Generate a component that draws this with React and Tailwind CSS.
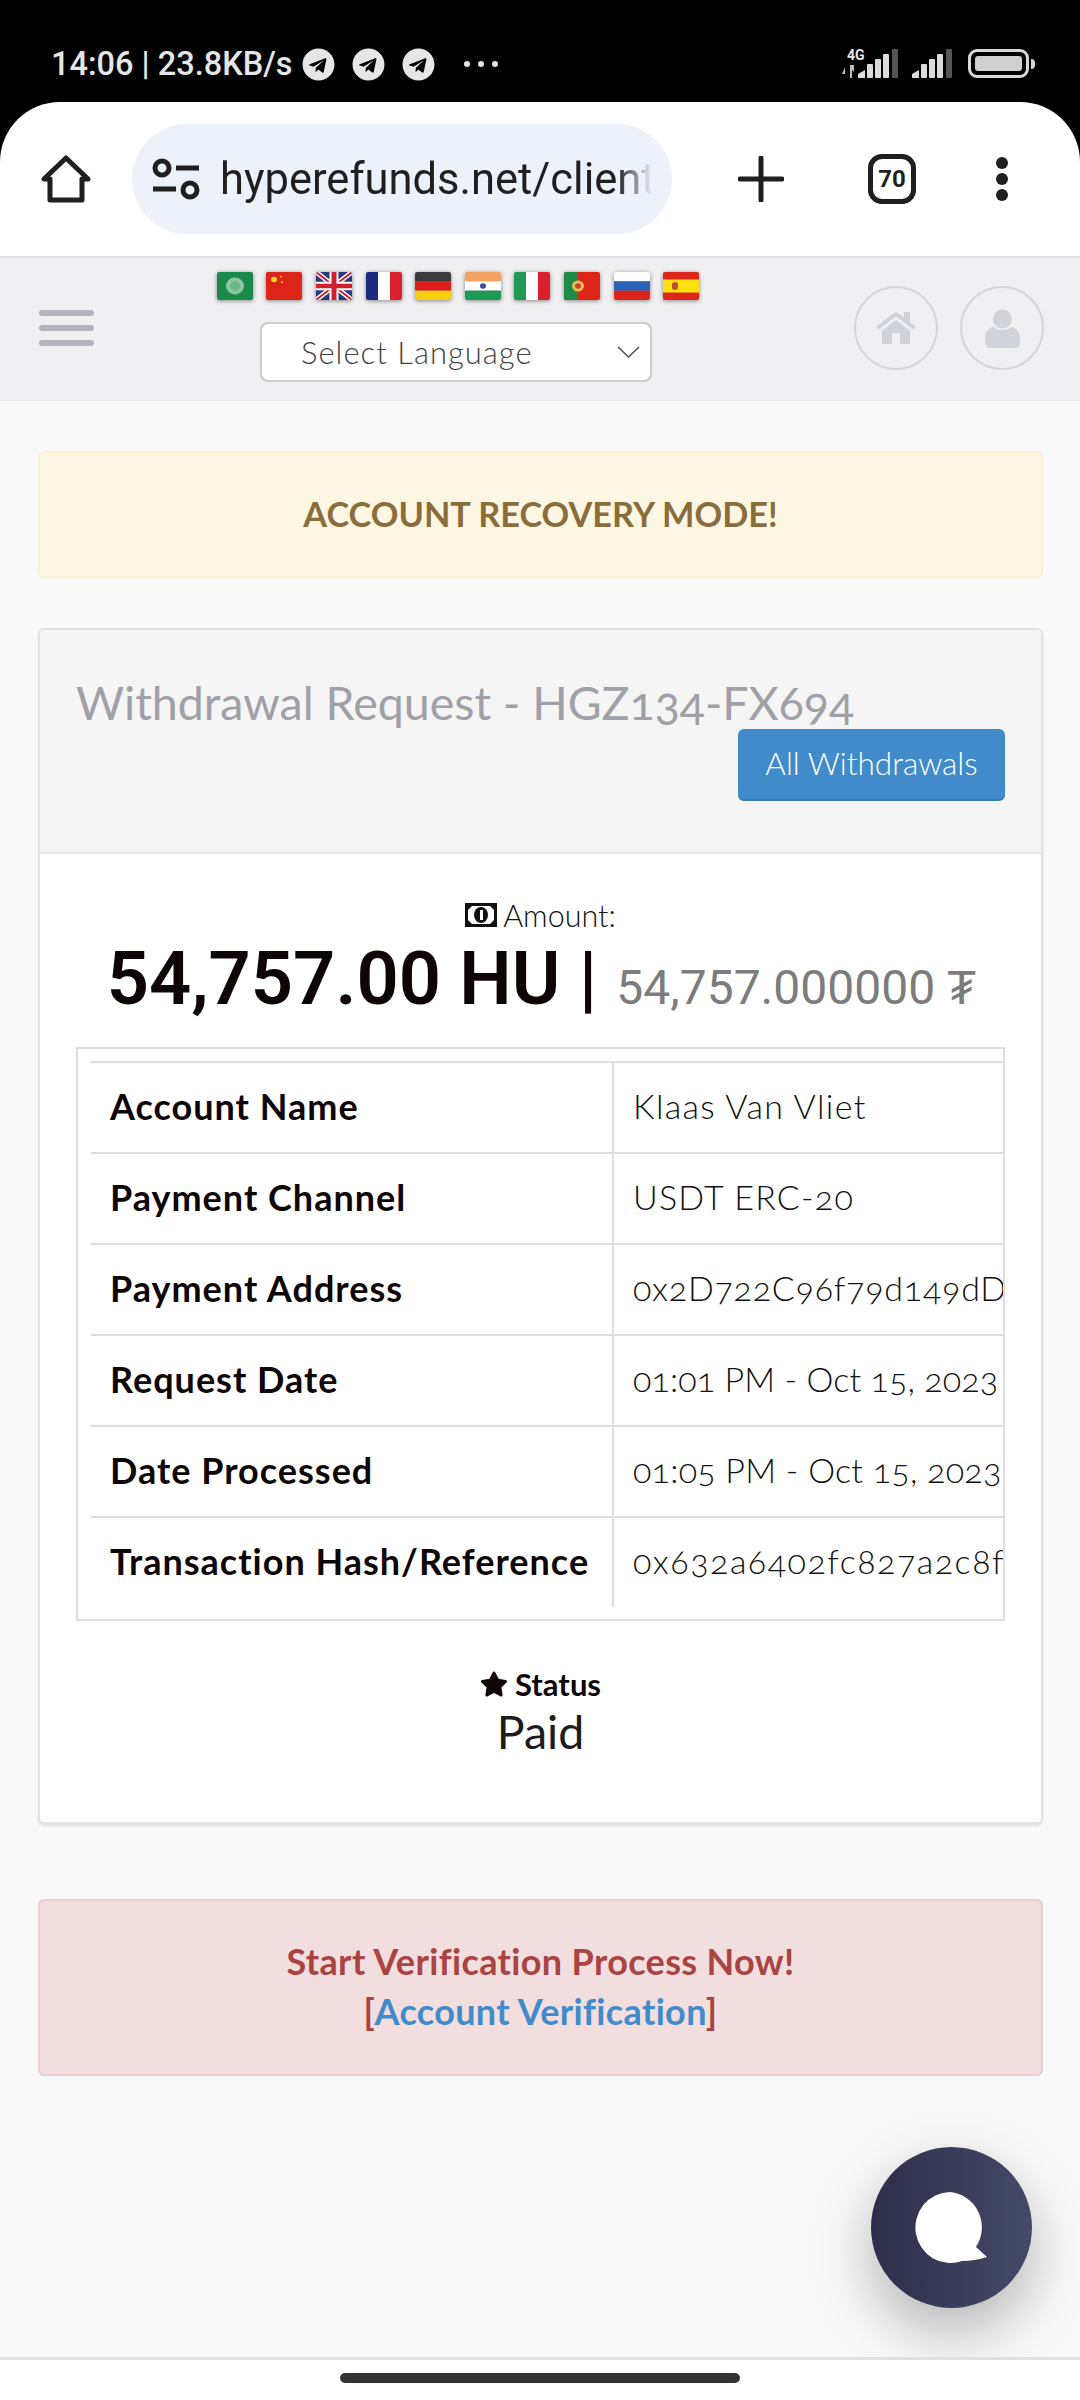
import React from 'react';
import { FaTelegram, FaStar } from 'react-icons/fa';

const sans = "font-['Lato','Noto_Sans',sans-serif]";

const rows = [
  ['Account Name', 'Klaas Van Vliet', 'tracking-[1.3px]'],
  ['Payment Channel', 'USDT ERC-20', 'tracking-[1.2px]'],
  ['Payment Address', '0x2D722C96f79d149dD', 'tracking-[0.75px]'],
  ['Request Date', '01:01 PM - Oct 15, 2023', 'tracking-[0.1px]'],
  ['Date Processed', '01:05 PM - Oct 15, 2023', 'tracking-[0.25px]'],
  ['Transaction Hash/Reference', '0x632a6402fc827a2c8f', 'tracking-[1.5px]'],
];

const Flag = ({ children }) => (
  <svg width="36" height="28" viewBox="0 0 36 30" preserveAspectRatio="none" className="rounded-[2px] blur-[0.4px] drop-shadow-[0_1px_2px_rgba(0,0,0,0.45)]">
    {children}
  </svg>
);

const Stripes3V = ({ a, b, c }) => (
  <>
    <rect width="12" height="30" fill={a} />
    <rect x="12" width="12" height="30" fill={b} />
    <rect x="24" width="12" height="30" fill={c} />
  </>
);

const Stripes3H = ({ a, b, c }) => (
  <>
    <rect width="36" height="10" fill={a} />
    <rect y="10" width="36" height="10" fill={b} />
    <rect y="20" width="36" height="10" fill={c} />
  </>
);

const Flags = () => (
  <div className="flex gap-[13.6px]">
    <Flag>
      <rect width="36" height="30" fill="#1a8a4a" />
      <circle cx="18" cy="15" r="9" fill="#8cc5a0" />
      <circle cx="18" cy="15" r="5" fill="#6db58a" />
    </Flag>
    <Flag>
      <rect width="36" height="30" fill="#dd2418" />
      <circle cx="8" cy="8" r="3" fill="#f5d020" />
      <circle cx="15" cy="5" r="1" fill="#f5d020" />
      <circle cx="16" cy="11" r="1" fill="#f5d020" />
    </Flag>
    <Flag>
      <rect width="36" height="30" fill="#2b3a80" />
      <path d="M0 0L36 30M36 0L0 30" stroke="#fff" strokeWidth="5" />
      <path d="M0 0L36 30M36 0L0 30" stroke="#d0202c" strokeWidth="2" />
      <path d="M18 0V30M0 15H36" stroke="#fff" strokeWidth="9" />
      <path d="M18 0V30M0 15H36" stroke="#d0202c" strokeWidth="5" />
    </Flag>
    <Flag><Stripes3V a="#1c2a80" b="#ffffff" c="#d9202c" /></Flag>
    <Flag><Stripes3H a="#3a3a3a" b="#dd1c1c" c="#f7cf10" /></Flag>
    <Flag>
      <Stripes3H a="#f5a260" b="#ffffff" c="#1f9a55" />
      <circle cx="18" cy="15" r="3" fill="#3b4a9a" />
    </Flag>
    <Flag><Stripes3V a="#1f9a55" b="#ffffff" c="#d9202c" /></Flag>
    <Flag>
      <rect width="36" height="30" fill="#dd2418" />
      <rect width="14" height="30" fill="#1f8a45" />
      <circle cx="14" cy="15" r="6" fill="#e8c050" />
      <circle cx="14" cy="15" r="3" fill="#d0402c" />
    </Flag>
    <Flag><Stripes3H a="#ffffff" b="#2a62b8" c="#dd2418" /></Flag>
    <Flag>
      <rect width="36" height="30" fill="#dd2418" />
      <rect y="8" width="36" height="14" fill="#fbe012" />
      <rect x="9" y="11" width="6" height="8" rx="2" fill="#c0502a" />
    </Flag>
  </div>
);

const Signal = () => (
  <svg width="40" height="29" viewBox="0 0 40 29" className="shrink-0">
    <path d="M0 29V25L7 21V29Z" fill="#dcdcdc" />
    <rect x="9" y="15" width="6" height="14" rx="1" fill="#dcdcdc" />
    <rect x="17" y="10" width="6" height="19" rx="1" fill="#dcdcdc" />
    <rect x="25" y="5" width="6" height="24" rx="1" fill="#dcdcdc" />
    <rect x="34" y="0" width="6" height="29" rx="1" fill="#555" />
  </svg>
);

const StatusBar = () => (
  <div className="h-[102px] bg-black flex items-start justify-between pl-[51px] pr-[45px] pt-[46px]">
    <div className="flex items-center text-[#e6e6e6] font-['Roboto',sans-serif] font-medium text-[32.5px] leading-[36px] h-[36px] whitespace-nowrap">
      <span>14:06 | 23.8KB/s</span>
      <FaTelegram className="ml-[9px] text-[33px]" />
      <FaTelegram className="ml-[17px] text-[33px]" />
      <FaTelegram className="ml-[17px] text-[33px]" />
      <span className="ml-[29px] flex gap-[8px]">
        <i className="block w-[6px] h-[6px] rounded-full bg-[#e6e6e6]" />
        <i className="block w-[6px] h-[6px] rounded-full bg-[#e6e6e6]" />
        <i className="block w-[6px] h-[6px] rounded-full bg-[#e6e6e6]" />
      </span>
    </div>
    <div className="flex items-start h-[32px] mt-[3px]">
      <div className="relative w-[57px] h-[29px] flex justify-end">
        <span className="absolute left-[6px] -top-[1px] text-[#e6e6e6] font-['Roboto',sans-serif] font-bold text-[14px] leading-none">4G</span>
        <svg width="12" height="13" viewBox="0 0 12 13" className="absolute left-[1px] bottom-0">
          <path d="M3 2L0 9H3ZM8 0V13H10V5L12 7V0Z" fill="#bdbdbd" />
        </svg>
        <Signal />
      </div>
      <div className="ml-[14px]"><Signal /></div>
      <div className="ml-[16px] flex items-center">
        <div className="w-[61px] h-[29px] rounded-[9px] border-[3px] border-[#d8d8d8] p-[4px]">
          <div className="w-full h-full rounded-[3px] bg-[#d0d0d0]" />
        </div>
        <div className="ml-[2px] w-[4px] h-[10px] rounded-r bg-[#d8d8d8]" />
      </div>
    </div>
  </div>
);

const BrowserBar = () => (
  <div className="bg-black">
    <div className="h-[156px] bg-white rounded-t-[60px] border-b-[2px] border-[#e2e3e2] flex items-center pl-[41px]">
      <svg width="50" height="50" viewBox="0 0 50 50" fill="none" stroke="#1f1f1f" strokeWidth="5" strokeLinejoin="round" strokeLinecap="round" className="shrink-0">
        <path d="M25 4L3 25H9V46H41V25H47Z" />
      </svg>
      <div className="ml-[41px] w-[540px] h-[110px] rounded-full bg-[#edf1fa] flex items-center pl-[20px] overflow-hidden shrink-0">
        <svg width="48" height="42" viewBox="0 0 48 42" fill="none" stroke="#1f1f1f" strokeWidth="5" className="shrink-0">
          <circle cx="10" cy="10" r="7" />
          <path d="M24 10H47M1 31H24" />
          <circle cx="38" cy="32" r="7" />
        </svg>
        <span className="ml-[20px] mt-[2px] w-[432px] overflow-hidden whitespace-nowrap text-[#1f1f1f] font-['Roboto',sans-serif] text-[43.5px] leading-[56px] [mask-image:linear-gradient(to_right,black_92%,transparent)]">hyperefunds.net/client</span>
      </div>
      <svg width="46" height="46" viewBox="0 0 46 46" stroke="#1f1f1f" strokeWidth="5" strokeLinecap="round" className="ml-[66px] shrink-0">
        <path d="M23 2V44M2 23H44" />
      </svg>
      <div className="ml-[84px] w-[48px] h-[50px] rounded-[14px] border-[5px] border-[#1f1f1f] flex items-center justify-center font-['Roboto',sans-serif] font-bold text-[24px] text-[#1f1f1f] shrink-0">70</div>
      <div className="ml-[80px] flex flex-col gap-[4px] shrink-0">
        <i className="block w-[12px] h-[12px] rounded-full bg-[#1f1f1f]" />
        <i className="block w-[12px] h-[12px] rounded-full bg-[#1f1f1f]" />
        <i className="block w-[12px] h-[12px] rounded-full bg-[#1f1f1f]" />
      </div>
    </div>
  </div>
);

const NavBar = () => (
  <div className="h-[143px] bg-[#f0f0f2] border-b border-[#eaeaec] flex items-start">
    <div className="ml-[39px] mt-[52px] w-[55px] flex flex-col gap-[9px] shrink-0">
      <i className="block h-[6px] rounded-sm bg-[#b4b4bc]" />
      <i className="block h-[6px] rounded-sm bg-[#b4b4bc]" />
      <i className="block h-[6px] rounded-sm bg-[#b4b4bc]" />
    </div>
    <div className="ml-[121px] mt-[14px] shrink-0 flex flex-col items-center w-[486px]">
      <Flags />
      <div className="mt-[22px] ml-[-4px] w-[392px] h-[60px] rounded-[8px] border-2 border-[#cbccd0] bg-white flex items-center pl-[39px] pr-[10px] justify-between">
        <span className={`${sans} text-[#444] text-[31px] tracking-[1px] font-light`}>Select Language</span>
        <svg width="23" height="12" viewBox="0 0 23 12" fill="none" stroke="#555" strokeWidth="1.6"><path d="M1 1L11.5 11L22 1" /></svg>
      </div>
    </div>
    <div className="ml-[153px] mt-[28px] flex gap-[22px] shrink-0">
      <div className="w-[84px] h-[84px] rounded-full border-2 border-[#d6d6dc] flex items-center justify-center">
        <svg width="40" height="32" viewBox="0 0 40 32" fill="#d2d3da">
          <path d="M1.5 16L20 2L38.5 16" fill="none" stroke="#d2d3da" strokeWidth="4" />
          <rect x="28" y="0" width="6" height="10" />
          <path d="M6 19L20 8L34 19V32H24V21H16V32H6Z" />
        </svg>
      </div>
      <div className="w-[84px] h-[84px] rounded-full border-2 border-[#d6d6dc] flex items-center justify-center">
        <svg width="35" height="39" viewBox="0 0 35 39" fill="#d2d3da">
          <circle cx="17.5" cy="10" r="9.5" />
          <path d="M0 30C0 23 4 18 9 18C12 22 23 22 26 18C31 18 35 23 35 30V33Q35 39 29 39H6Q0 39 0 33Z" />
        </svg>
      </div>
    </div>
  </div>
);

const Card = () => (
  <div className="mt-[50px] ml-[38px] w-[1005px] h-[1196px] rounded-[6px] border-2 border-[#e2e2e2] bg-white shadow-[0_2px_3px_rgba(0,0,0,0.1)] overflow-hidden flex flex-col">
    <div className="h-[224px] bg-[#f5f5f5] border-b-2 border-[#e6e6e6] pt-[44px] px-[36px] shrink-0">
      <h2 className={`${sans} text-[#a0a0a8] text-[46.5px] leading-[56px] font-normal whitespace-nowrap [font-variant-numeric:oldstyle-nums]`}>Withdrawal Request - HGZ134-FX694</h2>
      <div className="flex justify-end mt-[-1px]">
        <button className={`${sans} w-[267px] h-[72px] rounded-[6px] bg-[#428bca] border-b-2 border-[#357ebd] text-white text-[31.5px] font-light`}>All Withdrawals</button>
      </div>
    </div>
    <div className="flex-1 px-[36px]">
      <div className="mt-[43px] flex items-center justify-center text-[#111] text-[30.5px] leading-[36px]">
        <svg width="32" height="24" viewBox="0 0 32 24" className="mr-[6px] shrink-0">
          <rect width="32" height="24" fill="#111" />
          <path d="M7 3H25L29 7V17L25 21H7L3 17V7Z" fill="#fff" />
          <ellipse cx="16" cy="12" rx="7" ry="8" fill="#111" />
          <rect x="15" y="7" width="3" height="10" fill="#fff" />
        </svg>
        <span className={`${sans} font-light`}>Amount:</span>
      </div>
      <div className="mt-[8px] ml-[2px] flex items-baseline justify-center whitespace-nowrap font-['Roboto',sans-serif] h-[75px]">
        <span className="text-[#0e0606] text-[74px] leading-[75px] font-semibold">54,757.00 HU |</span>
        <span className="ml-[19px] text-[#7c7c7c] text-[48px] leading-[75px]">54,757.000000 ₮</span>
      </div>
      <div className="mt-[31px] h-[574px] border-2 border-[#dedede] pt-[12px] pl-[13px] overflow-hidden">
        {rows.map(([label, value, spacing]) => (
          <div key={label} className="flex h-[91px] border-t-2 border-[#dedede]">
            <div className={`w-[523px] shrink-0 pl-[19px] pt-[21px] border-r-2 border-[#dedede] ${sans} font-bold text-[#0e0606] text-[36px] tracking-[1px] leading-[44px] whitespace-nowrap`}>{label}</div>
            <div className={`flex-1 pl-[19px] pt-[21px] overflow-hidden whitespace-nowrap ${sans} font-light text-[#111] text-[34px] ${spacing} leading-[44px] [font-variant-numeric:oldstyle-nums]`}>{value}</div>
          </div>
        ))}
      </div>
      <div className={`mt-[46px] flex items-center justify-center text-[#0e0606] text-[31px] leading-[34px] font-bold ${sans}`}>
        <FaStar className="text-[28px] mr-[7px]" />
        Status
      </div>
      <p className={`${sans} mt-[2px] text-center text-[#1c1c1c] text-[46.5px] leading-[56px]`}>Paid</p>
    </div>
  </div>
);

export default function App() {
  return (
    <div className="relative w-[1080px] h-[2400px] bg-[#f9f9f9] overflow-hidden flex flex-col">
      <StatusBar />
      <BrowserBar />
      <NavBar />
      <div className="flex-1">
        <div className={`mt-[50px] ml-[38px] w-[1005px] h-[127px] rounded-[6px] border-2 border-[#faf0d8] bg-[#fdf6e3] flex items-center justify-center pb-[2px] ${sans} font-bold text-[#8a6d3b] text-[34.3px]`}>
          ACCOUNT RECOVERY MODE!
        </div>
        <Card />
        <div className={`mt-[75px] ml-[38px] w-[1005px] h-[177px] rounded-[6px] border-2 border-[#ebccd1] bg-[#f2dede] flex flex-col items-center justify-center pb-[4px] ${sans} font-bold text-[#a94442] text-[36px] tracking-[0.35px] leading-[50px]`}>
          <span>Start Verification Process Now!</span>
          <span>[<a className="text-[#428bca]">Account Verification</a>]</span>
        </div>
      </div>
      <div className="relative z-10 h-[43px] bg-white border-t-[3px] border-[#e0e2e0] flex justify-center pt-[13px] shrink-0">
        <div className="w-[400px] h-[10px] rounded-full bg-[#333]" />
      </div>
      <div className="absolute left-[871px] top-[2147px] w-[161px] h-[161px] rounded-full bg-gradient-to-r from-[#2d2e4a] to-[#444a68] shadow-[0_24px_60px_rgba(0,0,0,0.28)] flex items-center justify-center">
        <svg width="74" height="74" viewBox="0 0 74 74" fill="#fff">
          <path d="M35 1A35 35.5 0 1 0 47 70Q60 70 72 66L61 56A35 35.5 0 0 0 35 1Z" />
        </svg>
      </div>
    </div>
  );
}
